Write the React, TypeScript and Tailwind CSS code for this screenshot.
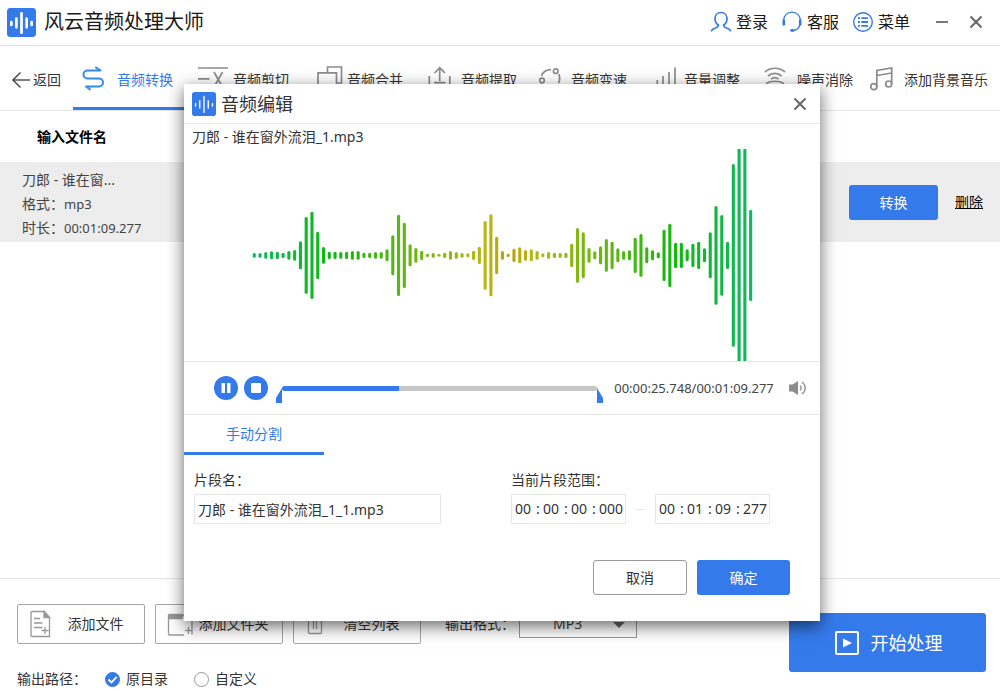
import React, { useState } from 'react';

const waveHalfHeights = [
  7, 7, 10, 12, 11, 8, 13, 16, 42, 115, 131, 71, 25, 11, 11, 10, 11, 13, 13, 8, 8, 10, 10, 18, 60,
  122, 98, 33, 22, 14, 5, 7, 4, 8, 13, 10, 7, 6, 14, 26, 103, 123, 56, 13, 5, 20, 24, 16, 18, 13, 6,
  10, 8, 7, 8, 35, 82, 69, 22, 12, 27, 49, 41, 21, 13, 15, 53, 64, 24, 15, 9, 77, 95, 38, 38, 18, 35,
  41, 21, 69, 148, 121, 41, 274, 320, 320, 137,
];

function barColor(i: number) {
  const hue = i <= 44 ? 150 - i * 2.25 : 51 + (i - 44) * 2.36;
  return `hsl(${hue.toFixed(0)} 85% 39%)`;
}

function Waveform() {
  return (
    <svg viewBox="0 0 636 212" className="block w-full" role="img" aria-label="波形">
      {waveHalfHeights.map((h, i) => (
        <rect
          key={i}
          x={68.7 + i * 5.772}
          y={106.3 - h / 3}
          width={3.1}
          height={(h * 2) / 3}
          rx={1.5}
          fill={barColor(i)}
        />
      ))}
    </svg>
  );
}

function Logo({ className, light }: { className: string; light?: boolean }) {
  return (
    <svg viewBox="0 0 30 30" className={className} aria-hidden="true">
      <rect width="30" height="30" rx="3.5" fill="#347aeb" />
      <g stroke="#fff" strokeWidth={light ? 1.7 : 2.8} strokeLinecap="round">
        <path d="M4.5 14.500v3M9.700 11v9M15 5.500v20M20.300 11v9M25.500 14.500v3" />
      </g>
    </svg>
  );
}

function ToolIcon({ children, color = '#8c8c8c' }: { children: React.ReactNode; color?: string }) {
  return (
    <svg
      viewBox="0 0 32 32"
      className="h-8 w-8 shrink-0 overflow-visible"
      fill="none"
      stroke={color}
      strokeWidth="1.7"
      aria-hidden="true"
    >
      {children}
    </svg>
  );
}

const tabs = [
  {
    name: '音频转换',
    icon: (
      <ToolIcon color="#338af5">
        <path
          strokeWidth="2"
          strokeLinecap="round"
          strokeLinejoin="round"
          d="M17 3.500l4.500 3H8.500a4 4 0 0 0 0 8H20a4 4 0 0 1 0 8H7l4 3"
        />
      </ToolIcon>
    ),
  },
  {
    name: '音频剪切',
    icon: (
      <ToolIcon>
        <path d="M3 4h30M3 14.800h11.500M19 8l9 16M27.500 8l-9 16" />
      </ToolIcon>
    ),
  },
  {
    name: '音频合并',
    icon: (
      <ToolIcon>
        <path d="M18.500 8.500V3h14v16h-5M9 8.800h18.500V24H9z" />
      </ToolIcon>
    ),
  },
  {
    name: '音频提取',
    icon: (
      <ToolIcon>
        <path d="M16.700 17V4M11.500 9l5.200-5.200L22 9M11 18.700h11.500M6.300 12v12h20.500V12" />
      </ToolIcon>
    ),
  },
  {
    name: '音频变速',
    icon: (
      <ToolIcon>
        <circle cx="22.700" cy="7.200" r="2.300" />
        <circle cx="9" cy="16.500" r="2.300" />
        <path d="M8.500 12c1.300-3.600 5-6.300 9.500-6.300M25.800 10c1.200 3 1.200 6-.3 9" />
      </ToolIcon>
    ),
  },
  {
    name: '音量调整',
    icon: (
      <ToolIcon>
        <path d="M11.300 16v9M17 12v13M23 8v17M29 3.500V25" />
      </ToolIcon>
    ),
  },
  {
    name: '噪声消除',
    icon: (
      <ToolIcon>
        <path d="M6 8c5.500-5 14.500-5 20 0M9 12c4-3.600 9.500-3.600 13.500 0M12 15.200c2.200-1.800 5.300-1.800 7.500 0M7 19.500c5-3 13-3 18 0" />
      </ToolIcon>
    ),
  },
  {
    name: '添加背景音乐',
    icon: (
      <ToolIcon>
        <circle cx="7.800" cy="22.700" r="3" />
        <circle cx="22.700" cy="20" r="3" />
        <path d="M10.800 22.700V6.500L25.700 4v16M10.800 11.500L25.700 9" />
      </ToolIcon>
    ),
  },
];

function CloseIcon() {
  return (
    <svg viewBox="0 0 14 14" className="h-3.5 w-3.5" stroke="#666" strokeWidth="2" aria-hidden="true">
      <path d="M1.500 1.500l11 11M12.500 1.500l-11 11" />
    </svg>
  );
}

function TitleBar() {
  return (
    <header className="flex h-[46px] shrink-0 items-center border-b border-[#dedede] pr-[17px] pb-px pl-[7px]">
      <Logo className="h-[29px] w-[29px]" />
      <h1 className="ml-2 flex-1 text-[20px] leading-7 text-[#1a1a1a]">风云音频处理大师</h1>
      <nav className="flex items-center gap-[13px] text-[16px] leading-6 text-[#1a1a1a]">
        <button className="flex items-center gap-1">
          <svg viewBox="0 0 22 22" className="h-[22px] w-[22px]" fill="none" stroke="#347aeb" strokeWidth="1.700" strokeLinecap="round" aria-hidden="true">
            <path d="M8.300 14C6 12.600 5 10.300 5 7.800 5 4 7.500 1.500 11 1.500S17 4 17 7.800c0 2.500-1 4.800-3.300 6.200" />
            <path d="M8.300 14c.3 1.500-.5 2-2.300 2.700-2 .7-3.800 1.500-4.500 3M13.700 14c-.3 1.500.5 2 2.300 2.700 2 .7 3.800 1.500 4.500 3" />
          </svg>
          登录
        </button>
        <button className="flex items-center gap-1">
          <svg viewBox="0 0 22 22" className="h-[22px] w-[22px]" fill="none" stroke="#347aeb" aria-hidden="true">
            <path strokeWidth="1.300" d="M2.500 9.500a8.500 8.300 0 0 1 17 0M19 13.500c-.8 3-3 5.300-6 6" />
            <path strokeWidth="2.600" strokeLinecap="round" d="M2.800 9.500v4M19.200 9.500v4" />
            <ellipse cx="11.300" cy="19.500" rx="2.200" ry="1.400" fill="#347aeb" stroke="none" />
          </svg>
          客服
        </button>
        <button className="flex items-center gap-1">
          <svg viewBox="0 0 22 22" className="h-[22px] w-[22px]" fill="none" stroke="#347aeb" aria-hidden="true">
            <circle cx="11" cy="11" r="9.300" strokeWidth="1.400" />
            <path strokeWidth="1.800" d="M6 7.200h2M9.300 7.200H16M6 11h2M9.300 11H16M6 14.800h2M9.300 14.800H16" />
          </svg>
          菜单
        </button>
      </nav>
      <button aria-label="最小化" className="ml-[26px] flex h-6 w-3 items-center">
        <span className="h-0.5 w-3 bg-[#777]" />
      </button>
      <button aria-label="关闭" className="ml-[21px] flex h-6 items-center">
        <CloseIcon />
      </button>
    </header>
  );
}

function Toolbar() {
  return (
    <div className="flex h-[65px] shrink-0 border-b border-[#e6e6e6] text-[14px] leading-5 text-[#333]">
      <button className="flex w-[73px] items-center gap-[3px] pt-1 pl-3">
        <svg viewBox="0 0 18 18" className="h-[18px] w-[18px]" fill="none" stroke="#555" strokeWidth="1.600" aria-hidden="true">
          <path d="M18 9H1.500M8.500 1.500L1 9l7.500 7.500" />
        </svg>
        返回
      </button>
      <nav className="grid flex-1 grid-cols-[116fr_114fr_114fr_110fr_113fr_113fr_107fr_140fr]">
        {tabs.map((t, i) => (
          <button
            key={t.name}
            className={
              'flex min-w-0 items-center gap-1.5 border-b-3 pt-[7px] pl-1.5 whitespace-nowrap ' +
              (i === 0 ? 'border-[#347aeb] text-[#347aeb]' : 'border-transparent')
            }
          >
            {t.icon}
            {t.name}
          </button>
        ))}
      </nav>
    </div>
  );
}

function FileTable() {
  return (
    <table className="w-full text-left text-[14px] text-[#333]">
      <thead>
        <tr className="h-[51px]">
          <th className="pl-[37px] font-bold text-black">输入文件名</th>
          <th />
        </tr>
      </thead>
      <tbody>
        <tr className="h-20 bg-[#ededed]">
          <td className="pt-1 pl-[22px] leading-6 text-[#444]">
            <p>刀郎 - 谁在窗...</p>
            <p>
              格式：<span className="text-[13px]">mp3</span>
            </p>
            <p>
              时长：<span className="text-[13px]">00:01:09.277</span>
            </p>
          </td>
          <td className="pr-[17px]">
            <div className="flex items-center justify-end gap-[17px]">
              <button className="h-[35px] w-[89px] rounded-[3px] bg-[#347aeb] text-white">转换</button>
              <a href="#" className="leading-5 text-black underline">
                删除
              </a>
            </div>
          </td>
        </tr>
      </tbody>
    </table>
  );
}

function FooterButton({ icon, children }: { icon: React.ReactNode; children: string }) {
  return (
    <button className="flex h-10 w-32 items-center rounded-[2px] border border-[#a6a6a6] pl-[11px] text-[#333]">
      <svg viewBox="0 0 26 28" className="h-7 w-[26px] shrink-0" fill="none" stroke="#999" strokeWidth="1.300" aria-hidden="true">
        {icon}
      </svg>
      <span className="flex-1 pr-2 text-center whitespace-nowrap">{children}</span>
    </button>
  );
}

function Radio({ label, checked, onChange }: { label: string; checked: boolean; onChange: () => void }) {
  return (
    <label className="flex items-center gap-1.5">
      <span className="relative flex">
        <input
          type="radio"
          name="output-path"
          checked={checked}
          onChange={onChange}
          className="h-[15px] w-[15px] appearance-none rounded-full border border-[#999] bg-white checked:border-[#347aeb] checked:bg-[#347aeb]"
        />
        {checked && (
          <svg viewBox="0 0 15 15" className="pointer-events-none absolute inset-0" fill="none" stroke="#fff" strokeWidth="1.800" aria-hidden="true">
            <path d="M3.500 7.500l3 3 5.200-5.600" />
          </svg>
        )}
      </span>
      {label}
    </label>
  );
}

function Footer() {
  const [custom, setCustom] = useState(false);
  return (
    <footer className="flex shrink-0 justify-between border-t border-[#e6e6e6] pr-3.5 pb-0.5 pl-[17px] text-[14px] leading-5 text-[#333]">
      <div className="flex flex-col gap-[25px] pt-[25px]">
        <div className="flex items-center gap-2.5">
          <FooterButton
            icon={
              <>
                <path d="M15 1.500H3a1 1 0 0 0-1 1v23a1 1 0 0 0 1 1h17.500V7.500L15 1.500zM5 8.500h6M5 13h8.500M5 17.500h8.500M12.500 20.500h7M16 17v7" />
                <path d="M15 1.500v6h5.500z" fill="#999" />
              </>
            }
          >
            添加文件
          </FooterButton>
          <FooterButton
            icon={
              <>
                <path d="M17 25H2.500a1 1 0 0 1-1-1V5.500H25M25 8v16.500M18 20.500h7M21.500 17v7" />
                <path d="M2 4.500h13v4H2z" fill="#999" />
              </>
            }
          >
            添加文件夹
          </FooterButton>
          <FooterButton
            icon={
              <path d="M3.500 7v15.500a1 1 0 0 0 1 1h11a1 1 0 0 0 1-1V7M1 6.500h18M7 3.500h6M8.500 10v9M11.500 10v9" />
            }
          >
            清空列表
          </FooterButton>
          <label className="ml-3.5 flex items-center gap-1">
            <span>输出格式：</span>
            <span className="relative flex">
              <select defaultValue="MP3" className="h-[27px] w-[118px] appearance-none border border-[#999] bg-white pl-[33px] text-[14px] text-[#444]">
                <option>MP3</option>
                <option>WAV</option>
                <option>FLAC</option>
              </select>
              <svg viewBox="0 0 12 6" className="pointer-events-none absolute top-[11px] right-3 h-1.5 w-3" fill="#666" aria-hidden="true">
                <path d="M0 0h12L6 6z" />
              </svg>
            </span>
          </label>
        </div>
        <div className="flex items-center">
          <span className="w-[88px]">输出路径：</span>
          <Radio label="原目录" checked={!custom} onChange={() => setCustom(false)} />
          <span className="w-[26px]" />
          <Radio label="自定义" checked={custom} onChange={() => setCustom(true)} />
        </div>
      </div>
      <button className="mt-[34px] flex h-[59px] w-[197px] items-center justify-center gap-3 rounded-[3px] bg-[#347aeb] pl-0.5 text-[18px] text-white">
        <svg viewBox="0 0 24 24" className="h-6 w-6" fill="none" stroke="#fff" strokeWidth="2" aria-hidden="true">
          <rect x="1" y="1" width="22" height="22" rx="1" />
          <path d="M8 7.500v9l9-4.500z" fill="#fff" stroke="none" />
        </svg>
        开始处理
      </button>
    </footer>
  );
}

function TimeBox({ label, parts }: { label: string; parts: string[] }) {
  return (
    <div role="group" aria-label={label} className="flex h-[30px] w-[115px] items-center border border-[#e6e6e6] pl-[3px]">
      {parts.map((p, i) => (
        <React.Fragment key={i}>
          {i > 0 && <span className="w-2.5 text-center">:</span>}
          <input
            defaultValue={p}
            aria-label={label + ['时', '分', '秒', '毫秒'][i]}
            className={(i === 3 ? 'w-[26px]' : 'w-[18px]') + ' bg-transparent outline-none'}
          />
        </React.Fragment>
      ))}
    </div>
  );
}

function Player() {
  return (
    <div className="flex h-[54px] items-center border-y border-[#e6e6e6] pr-[13px] pl-[30px]">
      <button aria-label="暂停" className="flex">
        <svg viewBox="0 0 24 24" className="h-6 w-6" aria-hidden="true">
          <circle cx="12" cy="12" r="12" fill="#347aeb" />
          <path d="M7.500 7h3.500v10H7.500zM13 7h3.500v10H13z" fill="#fff" />
        </svg>
      </button>
      <button aria-label="停止" className="ml-1.5 flex">
        <svg viewBox="0 0 24 24" className="h-6 w-6" aria-hidden="true">
          <circle cx="12" cy="12" r="12" fill="#347aeb" />
          <rect x="7" y="7" width="10" height="10" rx="1" fill="#fff" />
        </svg>
      </button>
      <div className="relative ml-2 flex flex-1 px-1.5">
        <input
          type="range"
          aria-label="播放进度"
          min={0}
          max={69277}
          defaultValue={25748}
          className="h-[5px] w-full appearance-none rounded-full bg-linear-to-r from-[#347aeb] from-37% to-[#c6c6c6] to-37% [&::-webkit-slider-thumb]:h-0 [&::-webkit-slider-thumb]:w-0 [&::-webkit-slider-thumb]:appearance-none"
        />
        <svg viewBox="0 0 6 15" className="absolute top-0.5 left-0 h-[15px] w-1.5" fill="#347aeb" aria-hidden="true">
          <path d="M6 0v15H0V10z" />
        </svg>
        <svg viewBox="0 0 6 15" className="absolute top-0.5 right-0 h-[15px] w-1.5" fill="#347aeb" aria-hidden="true">
          <path d="M0 0v15h6V10z" />
        </svg>
      </div>
      <span className="w-[186px] pr-1 text-center text-[13px] text-[#444]">00:00:25.748/00:01:09.277</span>
      <button aria-label="音量" className="flex">
        <svg viewBox="0 0 18 16" className="h-4 w-[18px]" aria-hidden="true">
          <path d="M0 4.500h3.500L9 1v14l-5.500-3.500H0z" fill="#8c8c8c" />
          <path d="M11 5.500c1.500 1.400 1.500 3.600 0 5M13 2c4.300 3.300 4.300 8.700 0 12" fill="none" stroke="#999" strokeWidth="1.500" />
        </svg>
      </button>
    </div>
  );
}

function EditDialog() {
  return (
    <div className="absolute inset-0 flex items-start justify-center pt-[84px] pl-1">
      <section
        role="dialog"
        aria-label="音频编辑"
        className="w-[636px] max-w-full bg-white text-[14px] leading-5 text-[#333] shadow-[0_5px_16px_rgba(0,0,0,0.6)]"
      >
        <header className="flex h-10 items-center border-b border-[#e6e6e6] pr-[13px] pl-2">
          <Logo light className="h-6 w-6" />
          <h2 className="ml-[5px] flex-1 text-[18px] leading-6">音频编辑</h2>
          <button aria-label="关闭" className="flex">
            <CloseIcon />
          </button>
        </header>
        <p className="h-[25px] pt-[3px] pl-2">刀郎 - 谁在窗外流泪_1.mp3</p>
        <Waveform />
        <Player />
        <button className="block h-10 w-[140px] border-b-3 border-[#347aeb] text-[#347aeb]">手动分割</button>
        <form className="pt-[15px] pr-[30px] pb-[26px] pl-2.5" onSubmit={(e) => e.preventDefault()}>
          <div className="flex gap-[70px]">
            <label className="flex w-[247px] flex-col gap-1">
              <span>片段名：</span>
              <input
                defaultValue="刀郎 - 谁在窗外流泪_1_1.mp3"
                className="h-[30px] border border-[#e6e6e6] px-[3px] outline-none"
              />
            </label>
            <div className="flex flex-col gap-1">
              <span>当前片段范围：</span>
              <div className="flex items-center">
                <TimeBox label="开始" parts={['00', '00', '00', '000']} />
                <span className="mx-2.5 h-px w-[9px] bg-[#e6e6e6]" />
                <TimeBox label="结束" parts={['00', '01', '09', '277']} />
              </div>
            </div>
          </div>
          <div className="mt-9 flex justify-end gap-2.5">
            <button type="button" className="h-[35px] w-[94px] rounded-[3px] border border-[#999]">
              取消
            </button>
            <button type="submit" className="h-[35px] w-[93px] rounded-[3px] bg-[#347aeb] text-white">
              确定
            </button>
          </div>
        </form>
      </section>
    </div>
  );
}

export default function App() {
  return (
    <div className="relative flex min-h-screen flex-col bg-white font-['Noto_Sans','Noto_Sans_CJK_SC',sans-serif]">
      <TitleBar />
      <Toolbar />
      <main className="flex-1">
        <FileTable />
      </main>
      <Footer />
      <EditDialog />
    </div>
  );
}
